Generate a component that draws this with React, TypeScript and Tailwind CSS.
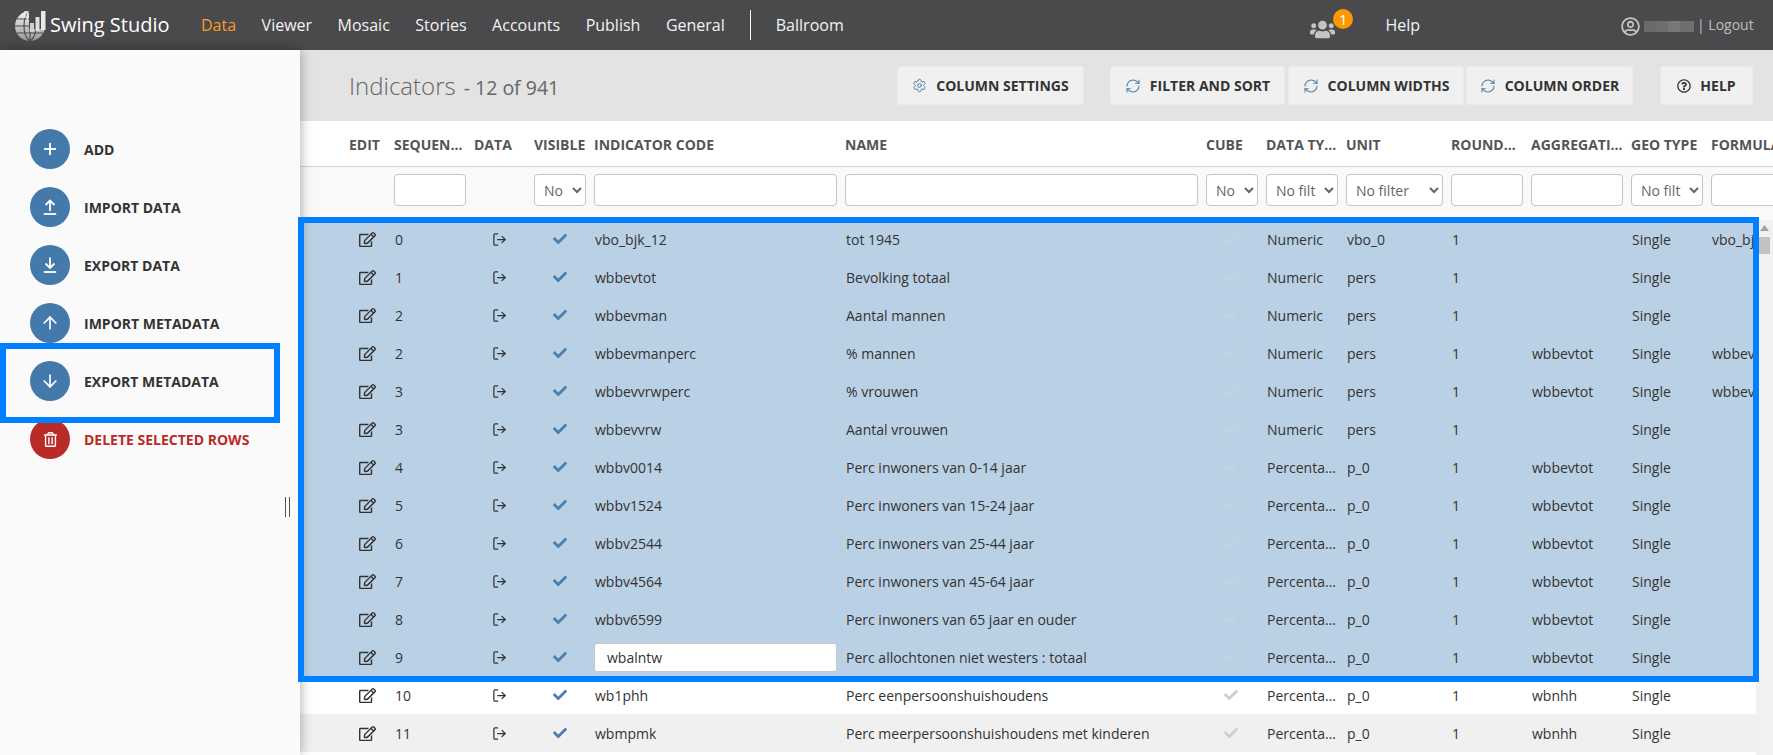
import React from "react";
import { FaRegEdit, FaCheck, FaUsers, FaRegTrashAlt, FaRegQuestionCircle, FaRegUserCircle } from "react-icons/fa";
import { LogOut, RefreshCw, Settings, Plus, ArrowUp, ArrowDown } from "lucide-react";

const font = { fontFamily: '"Open Sans", "Noto Sans", sans-serif' };

const cols = "grid-cols-[45px_80px_60px_60px_251px_361px_60px_80px_105px_80px_100px_80px_80px]";

const headers = ["EDIT", "SEQUENCE", "DATA", "VISIBLE", "INDICATOR CODE", "NAME", "CUBE", "DATA TYPE", "UNIT", "ROUNDING", "AGGREGATION", "GEO TYPE", "FORMULA"];

const selects: Record<string, string> = { VISIBLE: "No", CUBE: "No", "DATA TYPE": "No filt", UNIT: "No filter", "GEO TYPE": "No filt" };

type Row = [string, string, string, string, string, string, string, string?];
const rows: Row[] = [
  ["0", "vbo_bjk_12", "tot 1945", "Numeric", "vbo_0", "", "Single", "vbo_bjk_12"],
  ["1", "wbbevtot", "Bevolking totaal", "Numeric", "pers", "", "Single"],
  ["2", "wbbevman", "Aantal mannen", "Numeric", "pers", "", "Single"],
  ["2", "wbbevmanperc", "% mannen", "Numeric", "pers", "wbbevtot", "Single", "wbbevman"],
  ["3", "wbbevvrwperc", "% vrouwen", "Numeric", "pers", "wbbevtot", "Single", "wbbevvrw"],
  ["3", "wbbevvrw", "Aantal vrouwen", "Numeric", "pers", "", "Single"],
  ["4", "wbbv0014", "Perc inwoners van 0-14 jaar", "Percentage", "p_0", "wbbevtot", "Single"],
  ["5", "wbbv1524", "Perc inwoners van 15-24 jaar", "Percentage", "p_0", "wbbevtot", "Single"],
  ["6", "wbbv2544", "Perc inwoners van 25-44 jaar", "Percentage", "p_0", "wbbevtot", "Single"],
  ["7", "wbbv4564", "Perc inwoners van 45-64 jaar", "Percentage", "p_0", "wbbevtot", "Single"],
  ["8", "wbbv6599", "Perc inwoners van 65 jaar en ouder", "Percentage", "p_0", "wbbevtot", "Single"],
  ["9", "wbalntw", "Perc allochtonen niet westers : totaal", "Percentage", "p_0", "wbbevtot", "Single"],
  ["10", "wb1phh", "Perc eenpersoonshuishoudens", "Percentage", "p_0", "wbnhh", "Single"],
  ["11", "wbmpmk", "Perc meerpersoonshuishoudens met kinderen", "Percentage", "p_0", "wbnhh", "Single"],
];

function Logo() {
  return (
    <svg width="31" height="31" viewBox="0 0 31 31" className="shrink-0">
      <defs>
        <linearGradient id="g" x1="0" y1="0" x2="0" y2="1">
          <stop offset="0" stopColor="#f2f2f2" />
          <stop offset="1" stopColor="#9a9a9a" />
        </linearGradient>
      </defs>
      <circle cx="15" cy="16" r="15" fill="url(#g)" />
      <path d="M15 1 C7 6 7 26 15 31 M15 1 C23 6 23 26 15 31 M15 0 V31 M0 16 H30 M2 9 H28 M2 23 H28" stroke="#4a4a4c" strokeWidth="1.1" fill="none" />
      <path d="M14 0 H31 V19 H14 Z" fill="#4a4a4c" />
      <rect x="15" y="13" width="4" height="9" fill="#d0d0d0" />
      <rect x="20.5" y="7" width="4" height="14" fill="#dedede" />
      <rect x="26" y="1" width="4.5" height="19" fill="#e8e8e8" />
      <path d="M10 1 L10 8 M12.5 1 L12.5 10" stroke="#e0e0e0" strokeWidth="1.5" />
    </svg>
  );
}

function UploadIco({ down }: { down?: boolean }) {
  return (
    <svg width="14" height="16" viewBox="0 0 14 16" fill="none" stroke="white" strokeWidth="1.8">
      {down ? <path d="M7 0.5 V10.5 M2.5 6.5 L7 11 L11.5 6.5" /> : <path d="M7 12 V2 M2.5 6 L7 1.5 L11.5 6" />}
      <path d="M0.8 15 H13.2" />
    </svg>
  );
}

const side: { label: string; icon: React.ReactNode; red?: boolean }[] = [
  { label: "ADD", icon: <Plus size={18} strokeWidth={2.6} color="white" /> },
  { label: "IMPORT DATA", icon: <UploadIco /> },
  { label: "EXPORT DATA", icon: <UploadIco down /> },
  { label: "IMPORT METADATA", icon: <ArrowUp size={20} strokeWidth={2} color="white" /> },
  { label: "EXPORT METADATA", icon: <ArrowDown size={20} strokeWidth={2} color="white" /> },
  { label: "DELETE SELECTED ROWS", icon: <FaRegTrashAlt size={15} color="white" />, red: true },
];

function Btn({ icon, label, w }: { icon: React.ReactNode; label: string; w: string }) {
  return (
    <div className={`${w} h-[39px] flex items-center justify-center gap-[9px] bg-[#f0f0f0] border border-[#ebebeb] rounded-[3px] text-[14px] font-bold text-[#333]`}>
      {icon}
      <span>{label}</span>
    </div>
  );
}

const Sync = () => <RefreshCw size={16} strokeWidth={1.6} color="#4d80ad" />;

export default function App() {
  return (
    <div style={font} className="w-screen h-screen overflow-hidden flex flex-col relative bg-white">
      <header className="h-[50px] shrink-0 bg-[#4a4a4c] flex items-center text-[16px] text-[#f2f2f2]">
        <div className="w-[201px] shrink-0 flex items-center pl-[15px] gap-[4px]">
          <Logo />
          <span className="text-[20px] text-white">Swing Studio</span>
        </div>
        <nav className="flex items-center gap-[25.5px]">
          <span className="text-[#f79d2b]">Data</span>
          <span>Viewer</span>
          <span>Mosaic</span>
          <span>Stories</span>
          <span>Accounts</span>
          <span>Publish</span>
          <span>General</span>
        </nav>
        <div className="w-px h-[30px] bg-white ml-[25px] mr-[25px]" />
        <span>Ballroom</span>
        <div className="ml-auto flex items-center">
          <div className="relative mr-[50px]">
            <FaUsers size={25} color="#c4c4c4" className="mt-[9px]" />
            <span className="absolute top-[1px] left-[23px] w-[20px] h-[20px] rounded-full bg-[#ff9800] text-white text-[15px] leading-none flex items-center justify-center">1</span>
          </div>
          <span className="mr-[353px]">Help</span>
        </div>
        <div className="absolute left-[1621px] top-0 h-[50px] pt-[2px] flex items-center text-[14px] text-[#bdbdbd]">
          <FaRegUserCircle size={19} color="#c4c4c4" />
          <div className="flex ml-[4px] mr-[3px] opacity-90">
            <span className="w-[12px] h-[11px] bg-[#6e6e70]" />
            <span className="w-[12px] h-[11px] bg-[#737375]" />
            <span className="w-[12px] h-[11px] bg-[#7d7d7f]" />
            <span className="w-[14px] h-[11px] bg-[#747476]" />
          </div>
          <span className="mt-[-3px]">| Logout</span>
        </div>
      </header>

      <div className="flex-1 flex min-h-0">
        <aside className="w-[300px] shrink-0 bg-[#fafafa] shadow-[0_0_12px_rgba(0,0,0,0.35)] z-10 relative pt-[79px] pl-[30px]">
          <div className="flex flex-col gap-[18px]">
            {side.map((s) => (
              <div key={s.label} className="flex items-center gap-[14px] h-[40px]">
                <span className={`w-[40px] h-[40px] rounded-full flex items-center justify-center ${s.red ? "bg-[#b92b27]" : "bg-[#4479ab]"}`}>{s.icon}</span>
                <span className={`text-[14px] font-bold mt-[1px] ${s.red ? "text-[#b92b27]" : "text-[#333]"}`}>{s.label}</span>
              </div>
            ))}
          </div>
          <div className="absolute left-[285px] top-[447px] w-[5px] h-[20px] border-x border-[#555]" />
        </aside>

        <main className="flex-1 min-w-0 flex flex-col">
          <div className="h-[71px] shrink-0 bg-[#e3e3e3] flex items-center pl-[49px] relative">
            <span className="text-[24px] text-[#666] font-light">Indicators</span>
            <span className="text-[19.5px] text-[#666] ml-[8px] mt-[4px]">- 12 of 941</span>
            <div className="absolute left-[597px] top-[16px] flex">
              <Btn w="w-[187px] mr-[26px]" icon={<Settings size={15} strokeWidth={1.6} color="#4d80ad" />} label="COLUMN SETTINGS" />
              <Btn w="w-[175px] mr-[3px]" icon={<Sync />} label="FILTER AND SORT" />
              <Btn w="w-[176px] mr-[2px]" icon={<Sync />} label="COLUMN WIDTHS" />
              <Btn w="w-[167px] mr-[27px]" icon={<Sync />} label="COLUMN ORDER" />
              <Btn w="w-[93px]" icon={<FaRegQuestionCircle size={14} color="#333" />} label="HELP" />
            </div>
          </div>

          <div className={`h-[46px] shrink-0 bg-white border-b border-[#d2d2d2] grid ${cols} items-center pl-[49px] pt-[2px] overflow-hidden text-[14px] font-bold text-[#555]`}>
            {headers.map((h) => (
              <div key={h} className={h === "FORMULA" ? "whitespace-nowrap" : h === "ROUNDING" ? "truncate pr-[12px]" : "truncate pr-[8px]"}>{h}</div>
            ))}
          </div>

          <div className={`h-[53px] shrink-0 bg-[#f9f9f9] grid ${cols} pl-[49px] pt-[7px] overflow-hidden text-[14px] text-[#666]`}>
            {headers.map((h) => {
              const cls = "w-full h-[32px] bg-white border border-[#c4c4c4] rounded-[4px]";
              return (
                <div key={h} className="pr-[8.5px]">
                  {h === "EDIT" || h === "DATA" ? null : selects[h] ? (
                    <select className={`${cls} pl-[5px]`} defaultValue="x">
                      <option value="x">{selects[h]}</option>
                    </select>
                  ) : (
                    <input className={cls} />
                  )}
                </div>
              );
            })}
          </div>

          <div className="flex-1 flex min-h-0 bg-white">
            <div className="flex-1 min-w-0 overflow-hidden">
              {rows.map((r, i) => (
                <div key={i} className={`h-[38px] grid ${cols} items-center pl-[49px] text-[14px] text-[#333] ${i < 12 ? "bg-[#bad0e4]" : i === 13 ? "bg-[#f0f0f0]" : "bg-white"}`}>
                  <div className="pl-[10px]"><FaRegEdit size={17} color="#333" /></div>
                  <div className="pl-[1px]">{r[0]}</div>
                  <div className="pl-[18px]"><LogOut size={15} strokeWidth={2} color="#333" /></div>
                  <div className="pl-[19px]"><FaCheck size={14} color="#4a7fb0" /></div>
                  <div className="pr-[8.5px] pl-[1px]">
                    {r[1] === "wbalntw" ? (
                      <div className="h-[29px] bg-white border border-[#c8c8c8] rounded-[3px] flex items-center pl-[12px] ml-[-1px]">{r[1]}</div>
                    ) : r[1]}
                  </div>
                  <div className="pl-[1px] whitespace-nowrap">{r[2]}</div>
                  <div className="pl-[18px]"><FaCheck size={14} color={i < 12 ? "#c6d2dc" : "#cfcfcf"} /></div>
                  <div className="pl-[1px] pr-[8px] truncate">{r[3]}</div>
                  <div className="pl-[1px]">{r[4]}</div>
                  <div className="pl-[1px]">1</div>
                  <div className="pl-[1px]">{r[5]}</div>
                  <div className="pl-[1px]">{r[6]}</div>
                  <div className="pl-[1px] whitespace-nowrap">{r[7] ?? ""}</div>
                </div>
              ))}
            </div>
            <div className="w-[17px] shrink-0 bg-[#f1f1f1] flex flex-col items-center relative">
              <svg width="9" height="6" viewBox="0 0 9 6" className="mt-[5px]"><path d="M4.5 0 L9 6 H0 Z" fill="#a3a3a3" /></svg>
              <div className="w-[11px] h-[17px] bg-[#c1c1c1] mt-[6px]" />
            </div>
          </div>
        </main>
      </div>

      <div className="absolute left-0 top-[343px] w-[280px] h-[80px] border-[6px] border-[#007fff] z-20" />
      <div className="absolute left-[298px] top-[217px] w-[1461px] h-[465px] border-[6px] border-[#007fff] z-20" />
    </div>
  );
}
